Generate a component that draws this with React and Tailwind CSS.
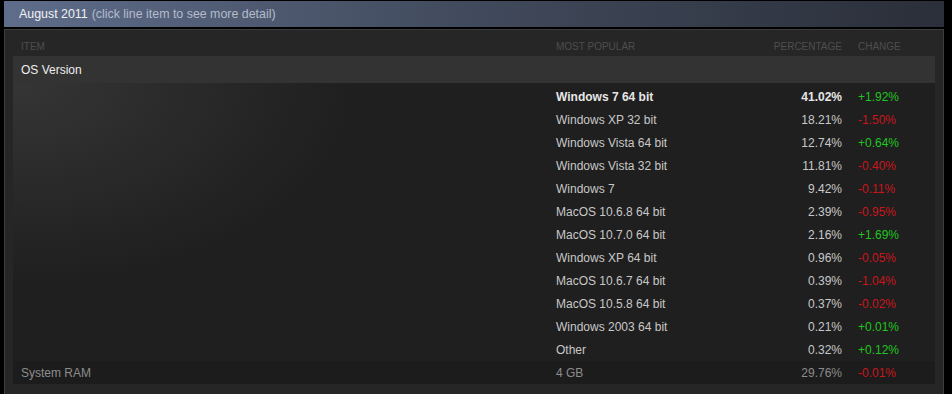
import React from "react";

const rows = [
  { name: "Windows 7 64 bit", pct: "41.02%", change: "+1.92%", up: true, bold: true },
  { name: "Windows XP 32 bit", pct: "18.21%", change: "-1.50%", up: false },
  { name: "Windows Vista 64 bit", pct: "12.74%", change: "+0.64%", up: true },
  { name: "Windows Vista 32 bit", pct: "11.81%", change: "-0.40%", up: false },
  { name: "Windows 7", pct: "9.42%", change: "-0.11%", up: false },
  { name: "MacOS 10.6.8 64 bit", pct: "2.39%", change: "-0.95%", up: false },
  { name: "MacOS 10.7.0 64 bit", pct: "2.16%", change: "+1.69%", up: true },
  { name: "Windows XP 64 bit", pct: "0.96%", change: "-0.05%", up: false },
  { name: "MacOS 10.6.7 64 bit", pct: "0.39%", change: "-1.04%", up: false },
  { name: "MacOS 10.5.8 64 bit", pct: "0.37%", change: "-0.02%", up: false },
  { name: "Windows 2003 64 bit", pct: "0.21%", change: "+0.01%", up: true },
  { name: "Other", pct: "0.32%", change: "+0.12%", up: true },
];

const cols = "grid grid-cols-[543px_186px_116px_77px]";

export default function App() {
  return (
    <div className="w-[952px] h-[394px] overflow-hidden bg-black font-['Liberation_Sans',Arial,sans-serif] text-[12px]">
      {/* month header */}
      <div className="ml-[4px] w-[940px] h-[26px] mt-[1px] flex items-center pl-[15px] text-[12.4px] bg-gradient-to-r from-[#5f6d8b] via-[#414a5c] to-[#2a2f39]">
        <span className="text-[#f2f2f2]">August 2011</span>
        <span className="ml-[4px] text-[#b4bccb]">(click line item to see more detail)</span>
      </div>

      {/* stats panel */}
      <div className="ml-[4px] mt-[2px] w-[940px] h-[400px] border border-[#3d3d3d] bg-[#262626] px-[8px] pt-[11px]">
        <div className={`${cols} h-[15px] text-[10px] leading-[12px] text-[#4e4e4e] uppercase`}>
          <div className="pl-[8px]">Item</div>
          <div>Most Popular</div>
          <div className="text-right pr-[16px]">Percentage</div>
          <div>Change</div>
        </div>

        <div className="h-[27px] bg-[#333333] flex items-center pl-[8px] text-[#eeeeee]">
          OS Version
        </div>

        <div className="pt-[2px] bg-[#1f1f1f] bg-[radial-gradient(ellipse_340px_200px_at_0%_0%,#353535,#1f1f1f)]">
          {rows.map((r) => (
            <div key={r.name} className={`${cols} h-[23px] items-center`}>
              <div />
              <div className={r.bold ? "font-bold text-[#e6e6e6]" : "text-[#c8c8c8]"}>{r.name}</div>
              <div className={`text-right pr-[16px] ${r.bold ? "font-bold text-[#e6e6e6]" : "text-[#c8c8c8]"}`}>
                {r.pct}
              </div>
              <div className={r.up ? "text-[#1fc41f]" : "text-[#c8161c]"}>{r.change}</div>
            </div>
          ))}
        </div>

        <div className={`${cols} h-[23px] items-center bg-[#1c1c1c] text-[#8c8c8c]`}>
          <div className="pl-[8px]">System RAM</div>
          <div>4 GB</div>
          <div className="text-right pr-[16px]">29.76%</div>
          <div className="text-[#c8161c]">-0.01%</div>
        </div>
      </div>
    </div>
  );
}
